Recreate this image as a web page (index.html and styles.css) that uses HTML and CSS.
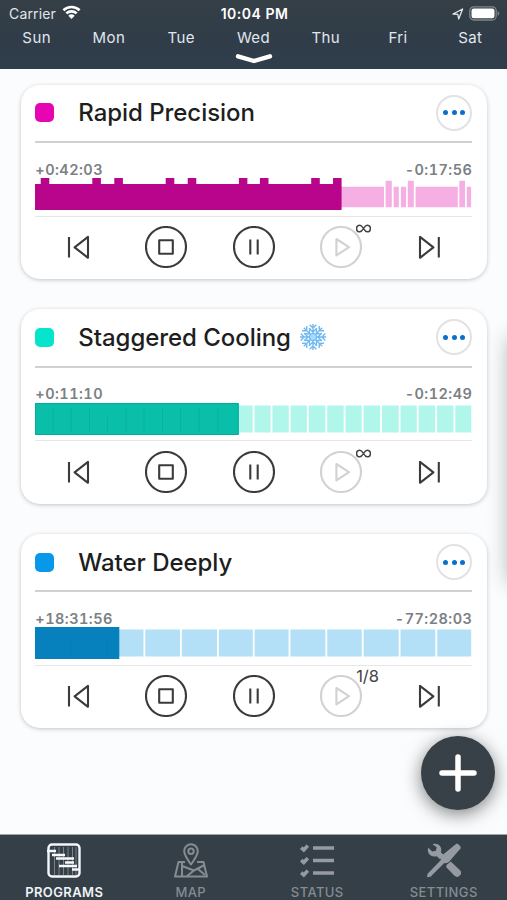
FILE: index.html
```html
<!DOCTYPE html>
<html lang="en">
<head>
<meta charset="utf-8">
<title>Programs</title>
<link rel="stylesheet" href="styles.css">
</head>
<body>
<svg class="defs" width="0" height="0" aria-hidden="true">
  <symbol id="prev" viewBox="0 0 42 42"><path d="M11 11v20.500M30 10.800v21L16.600 21.300z"/></symbol>
  <symbol id="next" viewBox="0 0 42 42"><path d="M30.800 11v20.500M12 10.800v21l13.400-10.500z"/></symbol>
  <symbol id="stop" viewBox="0 0 42 42"><circle cx="21" cy="21" r="20"/><path d="M14.200 14.200h13.600v13.600H14.200z"/></symbol>
  <symbol id="pause" viewBox="0 0 42 42"><circle cx="21" cy="21" r="20"/><path d="M17.300 13.400v15.200M24.700 13.400v15.200"/></symbol>
  <symbol id="play" viewBox="0 0 42 42"><circle cx="21" cy="21" r="20"/><path d="M16.400 13v16.400L29 21.200z"/></symbol>
</svg>
<div class="app">
  <header class="header">
    <div class="status">
      <div class="carrier"><span>Carrier</span>
        <svg width="19" height="15" viewBox="0 0 19 15"><path d="M1.400 5.200a11.700 11.700 0 0 1 16.200 0M4.300 8.400a7.600 7.600 0 0 1 10.400 0" fill="none" stroke="#fff" stroke-width="2.600"/><path d="M6.300 10.700a4.700 4.700 0 0 1 6.400 0L9.500 14z" fill="#fff"/></svg>
      </div>
      <div class="clock">10:04 PM</div>
      <div class="indicators">
        <svg width="12" height="12" viewBox="0 0 12 12"><path d="M1 6 10.600 1 6.700 11 5.800 6.300z" fill="none" stroke="#e4e7e9" stroke-width="1.300" stroke-linejoin="round"/></svg>
        <svg width="31" height="15" viewBox="0 0 31 15"><rect x=".8" y=".8" width="26.400" height="13.200" rx="4" fill="none" stroke="#7e868b" stroke-width="1.300"/><rect x="2.500" y="2.500" width="23" height="9.800" rx="2.200" fill="#fff"/><path d="M28.600 5c2.200.8 2.200 4 0 4.800z" fill="#7e868b"/></svg>
      </div>
    </div>
    <nav class="days">
      <span>Sun</span><span>Mon</span><span>Tue</span><span>Wed</span><span>Thu</span><span>Fri</span><span>Sat</span>
    </nav>
    <svg class="chevron" width="38" height="12" viewBox="0 0 38 12"><path d="M3 3.300 19 8 35 3.300" fill="none" stroke="#fff" stroke-width="4.400" stroke-linecap="round" stroke-linejoin="round"/></svg>
  </header>

  <main class="programs">
    <article class="card">
      <div class="title"><i class="chip pink"></i><h2>Rapid Precision</h2><button class="more"><b></b><b></b><b></b></button></div>
      <div class="times"><span>+0:42:03</span><span>-0:17:56</span></div>
      <svg class="timeline" viewBox="0 0 437 32">
        <path fill="#f6afe3" d="M306 8.700h43v20.600h-43zM350.600 2.700h6.200v26.600h-6.200zM358.600 8.700h5.200v20.600h-5.200zM365.900 8.700h5.200v20.600h-5.200zM372.800 2.700h6v26.600h-6zM380.600 8.700h42.200v20.600h-42.200zM424.300 2.700h5.700v26.600h-5.700zM431.800 8.700h4.300v20.600h-4.300z"/>
        <path fill="#b9058c" d="M0 6h5.700V0h8.600v6h43V0h8.600v6h13.400V0h8.600v6h42.800V0h8.600v6h13.400V0h8.600v6h42.600V0h8.500v6h12.500V0h8.600v6h42.700V0h8.600v6H298V0h8.600v32H0z"/>
      </svg>
      <div class="controls">
        <svg><use href="#prev"/></svg><svg><use href="#stop"/></svg><svg><use href="#pause"/></svg>
        <div class="play"><svg><use href="#play"/></svg><em class="loop"><svg viewBox="0 0 15 9"><path d="M7.500 4.500C6 1.900 5 1.200 3.900 1.200a3.300 3.300 0 0 0 0 6.600C5 7.800 6 7.100 7.500 4.500S10 1.200 11.100 1.200a3.300 3.300 0 0 1 0 6.600C10 7.800 9 7.100 7.500 4.500z"/></svg></em></div>
        <svg><use href="#next"/></svg>
      </div>
    </article>

    <article class="card">
      <div class="title"><i class="chip teal"></i><h2>Staggered Cooling</h2>
        <svg class="flake" width="28" height="28" viewBox="-14 -14 28 28">
          <defs><g id="arm"><path d="M0 0V-13M-3.400-12.200 0-9l3.400-3.200M-4-8.700 0-5l4-3.700"/></g></defs>
          <g><use href="#arm"/><use href="#arm" transform="rotate(45)"/><use href="#arm" transform="rotate(90)"/><use href="#arm" transform="rotate(135)"/><use href="#arm" transform="rotate(180)"/><use href="#arm" transform="rotate(225)"/><use href="#arm" transform="rotate(270)"/><use href="#arm" transform="rotate(315)"/></g>
          <circle r="3.600"/>
        </svg>
        <button class="more"><b></b><b></b><b></b></button></div>
      <div class="times"><span>+0:11:10</span><span>-0:12:49</span></div>
      <svg class="timeline" viewBox="0 0 437 32">
        <path fill="#b1f6eb" d="M203 2.500h233.300v27H203z"/>
        <path stroke="#fff" stroke-width="1.800" d="M218.600 2v28M236.500 2v28M254.700 2v28M272.800 2v28M291.300 2v28M309.600 2v28M327.700 2v28M346 2v28M364.600 2v28M382.700 2v28M401.100 2v28M419.400 2v28"/>
        <path fill="#0abfa9" d="M0 0h203.700v32H0z"/>
        <path stroke="#079f8e" d="M18 5v24M36 5v24M54.500 5v24M72.500 14v15M91 5v24M109 5v24M127.500 5v24M145.500 5v24M164 5v24M183 5v24" opacity=".4"/>
        <path fill="none" stroke="#06ab98" d="M.5.5h202.700v31H.5z"/>
      </svg>
      <div class="controls">
        <svg><use href="#prev"/></svg><svg><use href="#stop"/></svg><svg><use href="#pause"/></svg>
        <div class="play"><svg><use href="#play"/></svg><em class="loop"><svg viewBox="0 0 15 9"><path d="M7.500 4.500C6 1.900 5 1.200 3.900 1.200a3.300 3.300 0 0 0 0 6.600C5 7.800 6 7.100 7.500 4.500S10 1.200 11.100 1.200a3.300 3.300 0 0 1 0 6.600C10 7.800 9 7.100 7.500 4.500z"/></svg></em></div>
        <svg><use href="#next"/></svg>
      </div>
    </article>

    <article class="card">
      <div class="title"><i class="chip blue"></i><h2>Water Deeply</h2><button class="more"><b></b><b></b><b></b></button></div>
      <div class="times"><span>+18:31:56</span><span>-77:28:03</span></div>
      <svg class="timeline" viewBox="0 0 437 32">
        <path fill="#b3e0f6" d="M84 2.500h352.200v27H84z"/>
        <path stroke="#fff" stroke-width="1.800" d="M109.400 2v28M145.900 2v28M182.900 2v28M218.700 2v28M254.500 2v28M291.300 2v28M327.700 2v28M364.600 2v28M401.300 2v28"/>
        <path fill="#0781bd" d="M0 0h84.300v32H0z"/>
        <path stroke="#0674ae" d="M36 14v15M72 14v15" opacity=".4"/>
      </svg>
      <div class="controls">
        <svg><use href="#prev"/></svg><svg><use href="#stop"/></svg><svg><use href="#pause"/></svg>
        <div class="play"><svg><use href="#play"/></svg><em class="count">1/8</em></div>
        <svg><use href="#next"/></svg>
      </div>
    </article>
  </main>

  <div class="drawer"></div>
  <button class="add"><svg width="38" height="38" viewBox="0 0 38 38"><path d="M19 3v32M3 19h32" stroke="#fff" stroke-width="5.500" stroke-linecap="round"/></svg></button>

  <footer class="tabs">
    <a class="tab active"><svg width="34" height="35" viewBox="0 0 34 35"><rect x="1.500" y="1.500" width="31" height="32" rx="3.500" fill="none" stroke="#f4f6fb" stroke-width="2.400"/><path d="M7.500 4v28M12 4v28M16.500 4v28M21 4v28M25.500 4v28M29 4v28" stroke="#7b838a" stroke-width="1"/><path d="M0 8h9M5 12h13M9 15.500h18M18 19.500h9M12 23h18M25 26.500h8" stroke="#f7f8fc" stroke-width="2.400"/></svg><span>PROGRAMS</span></a>
    <a class="tab"><svg width="34" height="35" viewBox="0 0 34 35" fill="none" stroke="#858c92" stroke-width="2" stroke-linejoin="round"><path d="M17 21.500C13 16 10.200 12 10.200 8a6.800 6.800 0 0 1 13.600 0c0 4-2.800 8-6.800 13.500z"/><circle cx="17" cy="8.300" r="2.700"/><path d="M11 19H4.500L1 33.500h32L29.500 19H23"/><path d="M8 19v14M8 23l12 4.500 10.500-5.500M20 27.500 13 33M24 26l7 6"/></svg><span>MAP</span></a>
    <a class="tab"><svg width="34" height="35" viewBox="0 0 34 35" fill="none" stroke="#969ba3"><path d="M13 5h21M13 17.500h21M13 30h21" stroke-width="3.500"/><path d="m1.200 4.600 2.600 2.400L7.800 2.600M1.200 17.100l2.600 2.400 4-4.400M1.200 29.600 3.800 32l4-4.400" stroke-width="3.600"/></svg><span>STATUS</span></a>
    <a class="tab"><svg width="34" height="35" viewBox="0 0 34 35" fill="#969ba3"><path d="M5.500 1.200c3-1.200 6.500-.2 8 2.600 1 2 .9 3.800.4 5.400l3.100 3.100-4 4-3.300-3.100c-3.500 1-7.200-.5-8.400-3.800-.6-1.700-.6-3.300 0-4.700L5.200 8.600l3.700-.9.8-3.400z"/><path d="m19.300 22.300 4.400-3.800 9.300 8.800a3.900 3.900 0 0 1-5.500 5.500L19.500 24.500z"/><path d="M29.300.8c1.500-.7 5 2.600 4.400 4.400L22.300 18.600c-1.200 1.400-3.300 2-5 1.500L3.500 33.800 0 34.200l.6-3.400 13.300-13.700c-.4-1.800.1-3.700 1.600-5z"/></svg><span>SETTINGS</span></a>
  </footer>
</div>
</body>
</html>
```
FILE: styles.css
```css
* { box-sizing: border-box; }
body { margin: 0; font-family: Inter, "Liberation Sans", sans-serif; }
button { border: 0; padding: 0; font: inherit; }
svg { display: block; flex: none; }
.defs { position: absolute; }
.app {
  position: relative;
  width: 507px;
  height: 900px;
  display: flex;
  flex-direction: column;
  overflow: hidden;
  background: #fafcfd;
}

.header {
  height: 69px;
  flex: none;
  background: linear-gradient(#343f46, #303c48 55%, #303d4b);
  color: #fff;
  display: flex;
  flex-direction: column;
  align-items: center;
}
.status {
  width: 100%;
  height: 27px;
  padding: 0 7px 0 9px;
  display: grid;
  grid-template-columns: 1fr auto 1fr;
  align-items: center;
  font-size: 14px;
}
.carrier { display: flex; align-items: center; gap: 6px; color: #e2e5e8; letter-spacing: .15px; }
.carrier svg { margin-top: -3px; }
.clock { font-weight: 600; letter-spacing: .5px; }
.indicators { display: flex; justify-content: flex-end; align-items: center; gap: 5px; }
.days {
  width: 506px;
  display: grid;
  grid-template-columns: repeat(7, 1fr);
  text-align: center;
  font-size: 15px;
  line-height: 20px;
  letter-spacing: .4px;
  color: #e0e7ef;
  margin-top: 1px;
}
.chevron { margin-top: 5px; }

.programs {
  flex: 1;
  padding: 15.500px 20px 0 21px;
  display: flex;
  flex-direction: column;
  gap: 30.200px;
}
.card {
  height: 194.500px;
  flex: none;
  padding: 0 14.700px 0 14.300px;
  border-radius: 19px;
  background: #fff;
  box-shadow: 0 1px 4px rgba(0, 0, 0, .22);
}
.title {
  height: 58.500px;
  display: flex;
  align-items: center;
  border-bottom: 2px solid #d0d2d2;
}
.chip { width: 19px; height: 19px; border-radius: 5px; margin-right: 24px; }
.pink { background: #e605b1; }
.teal { background: #05e5cc; }
.blue { background: #0798e9; }
h2 { margin: 0; font-size: 24px; font-weight: 500; letter-spacing: -.05px; color: #1d1e20; white-space: nowrap; }
.flake { margin-left: 8px; fill: #a8dcfb; stroke: #72b9ef; stroke-width: 1.400; }
.flake g { fill: none; }
.more {
  width: 36px;
  height: 36px;
  margin-left: auto;
  border: 2px solid #e2e2e4;
  border-radius: 50%;
  background: #fff;
  display: flex;
  justify-content: center;
  align-items: center;
  gap: 3.400px;
}
.more b { width: 5px; height: 5px; border-radius: 50%; background: #0870cc; }
.times {
  height: 35px;
  padding-top: 17.500px;
  display: flex;
  justify-content: space-between;
  font-size: 14.500px;
  font-weight: 600;
  font-variant-numeric: tabular-nums;
  line-height: 18px;
  letter-spacing: .45px;
  color: #7b8084;
}
.timeline { width: 437px; height: 32px; }
.controls {
  height: 62px;
  margin-top: 5.500px;
  border-top: 1px solid #e6e6e6;
  display: grid;
  grid-template-columns: repeat(5, 1fr);
  justify-items: center;
  align-items: center;
  fill: none;
  stroke: #393b3d;
  stroke-width: 2.100;
  stroke-linejoin: round;
}
.controls svg { width: 42px; height: 42px; }
.play { position: relative; stroke: #d2d2d2; }
.play em { position: absolute; font-style: normal; color: #414346; }
.play .loop { left: 36px; top: -2px; }
.play .loop svg { width: 15px; height: 9px; stroke: #414346; stroke-width: 1.500; }
.play .count { left: 36px; top: -9px; font-size: 16.500px; line-height: 20px; letter-spacing: -.1px; }

.drawer {
  position: absolute;
  left: 509px;
  top: 335px;
  width: 40px;
  height: 245px;
  box-shadow: 0 3px 22px rgba(0, 0, 0, .3);
}
.add {
  position: absolute;
  left: 421px;
  top: 736px;
  width: 74px;
  height: 74px;
  border-radius: 50%;
  background: #384148;
  box-shadow: 0 4px 18px rgba(0, 0, 0, .5);
  display: grid;
  place-items: center;
}

.tabs {
  position: relative;
  height: 66px;
  flex: none;
  padding: 0 0 0 1px;
  background: #343f47;
  border-top: 1px solid #a1a6aa;
  display: grid;
  grid-template-columns: repeat(4, 1fr);
}
.tab {
  display: flex;
  flex-direction: column;
  align-items: center;
  padding-top: 8px;
  color: #858c92;
  font-size: 13px;
  font-weight: 500;
  letter-spacing: .4px;
}
.tab span { margin-top: 5px; line-height: 18px; }
.tab.active { color: #f0f3f7; font-weight: 600; }
```
